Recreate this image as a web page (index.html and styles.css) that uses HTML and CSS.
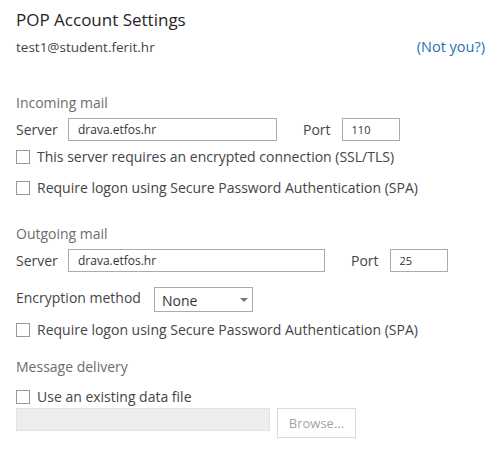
FILE: index.html
```html
<!DOCTYPE html>
<html lang="en">

<head>
  <meta charset="UTF-8" />
  <title>POP Account Settings</title>
  <link rel="stylesheet" href="styles.css">
</head>

<body>
  <div class="panel">
    <h1 class="title">POP Account Settings</h1>
    <div class="account">
      <span>test1@student.ferit.hr</span>
      <a href="#">(Not you?)</a>
    </div>

    <!-- Incoming -->
    <section class="group incoming">
      <h2>Incoming mail</h2>
      <div class="server-row">
        <label>Server</label>
        <input class="field server" type="text" value="drava.etfos.hr">
        <label class="port-label">Port</label>
        <input class="field port" type="text" value="110">
      </div>
      <label class="check first"><input type="checkbox">This server requires an encrypted connection (SSL/TLS)</label>
      <label class="check"><input type="checkbox">Require logon using Secure Password Authentication (SPA)</label>
    </section>

    <!-- Outgoing -->
    <section class="group outgoing">
      <h2>Outgoing mail</h2>
      <div class="server-row">
        <label>Server</label>
        <input class="field server wide" type="text" value="drava.etfos.hr">
        <label class="port-label">Port</label>
        <input class="field port" type="text" value="25">
      </div>
      <div class="enc-row">
        <label>Encryption method</label>
        <div class="select">None<span class="arrow"></span></div>
      </div>
      <label class="check after-enc"><input type="checkbox">Require logon using Secure Password Authentication (SPA)</label>
    </section>

    <!-- Delivery -->
    <section class="group delivery">
      <h2>Message delivery</h2>
      <label class="check"><input type="checkbox">Use an existing data file</label>
      <div class="file-row">
        <input class="field file" type="text" disabled>
        <button class="browse" disabled>Browse...</button>
      </div>
    </section>
  </div>
</body>

</html>
```

FILE: styles.css
```css
body {
  margin: 0;
  padding: 0;
  background-color: #fff;
  font-family: "Open Sans", "Noto Sans", sans-serif;
  color: #444;
}

.panel {
  padding: 8px 16px 0 16px;
  width: 470px;
}

.title {
  margin: 0;
  font-size: 17px;
  font-weight: normal;
  color: #262626;
  line-height: 24px;
}

.account {
  display: flex;
  justify-content: space-between;
  align-items: baseline;
  margin-top: 6px;
  font-size: 13.5px;
  line-height: 18px;
  color: #444;
}

.account a {
  color: #2a6fb3;
  text-decoration: none;
  font-size: 14.5px;
  margin-right: 1px;
}

.group h2 {
  margin: 0;
  font-size: 14px;
  font-weight: normal;
  color: #6d6d6d;
  line-height: 20px;
}

.incoming {
  margin-top: 37px;
}

.outgoing {
  margin-top: 25px;
}

.delivery {
  margin-top: 16px;
}

.server-row {
  display: flex;
  align-items: center;
  margin-top: 5px;
  font-size: 14px;
}

.server-row label {
  width: 52px;
}

.field {
  box-sizing: border-box;
  height: 23px;
  border: 1px solid #ababab;
  padding: 0 9px;
  font-family: inherit;
  font-size: 12px;
  color: #333;
  margin: 0;
}

.server {
  width: 209px;
}

.server.wide {
  width: 257px;
}

.server-row .port-label {
  width: auto;
  margin-left: 26px;
  margin-right: 11px;
}

.port {
  width: 58px;
  font-size: 11px;
}

.check {
  display: flex;
  align-items: center;
  font-size: 14px;
  color: #444;
  margin-top: 9px;
  line-height: 22px;
}

.check.first {
  margin-top: 5px;
}

.check.after-enc {
  margin-top: 7px;
}

.check input {
  appearance: none;
  box-sizing: border-box;
  width: 14px;
  height: 14px;
  border: 1px solid #999;
  background: #fff;
  margin: 0 7px 0 0;
}

.enc-row {
  display: flex;
  align-items: flex-start;
  margin-top: 15px;
  font-size: 14px;
}

.enc-row label {
  width: 138px;
  padding-top: 1px;
}

.select {
  box-sizing: border-box;
  position: relative;
  width: 99px;
  height: 25px;
  border: 1px solid #ababab;
  padding: 3px 0 0 7px;
  font-size: 14px;
  color: #333;
}

.select .arrow {
  position: absolute;
  right: 4px;
  top: 10px;
  width: 0;
  height: 0;
  border-left: 4.5px solid transparent;
  border-right: 4.5px solid transparent;
  border-top: 4.5px solid #777;
}

.file-row {
  display: flex;
  align-items: flex-start;
  margin-top: 0;
}

.file {
  width: 254px;
  background-color: #ededed;
  border-color: #e2e2e2;
}

.browse {
  box-sizing: border-box;
  width: 79px;
  height: 30px;
  margin-left: 7px;
  border: 1px solid #dadada;
  background-color: #fff;
  color: #a3a3a3;
  font-family: inherit;
  font-size: 13px;
  padding: 0;
}
```
